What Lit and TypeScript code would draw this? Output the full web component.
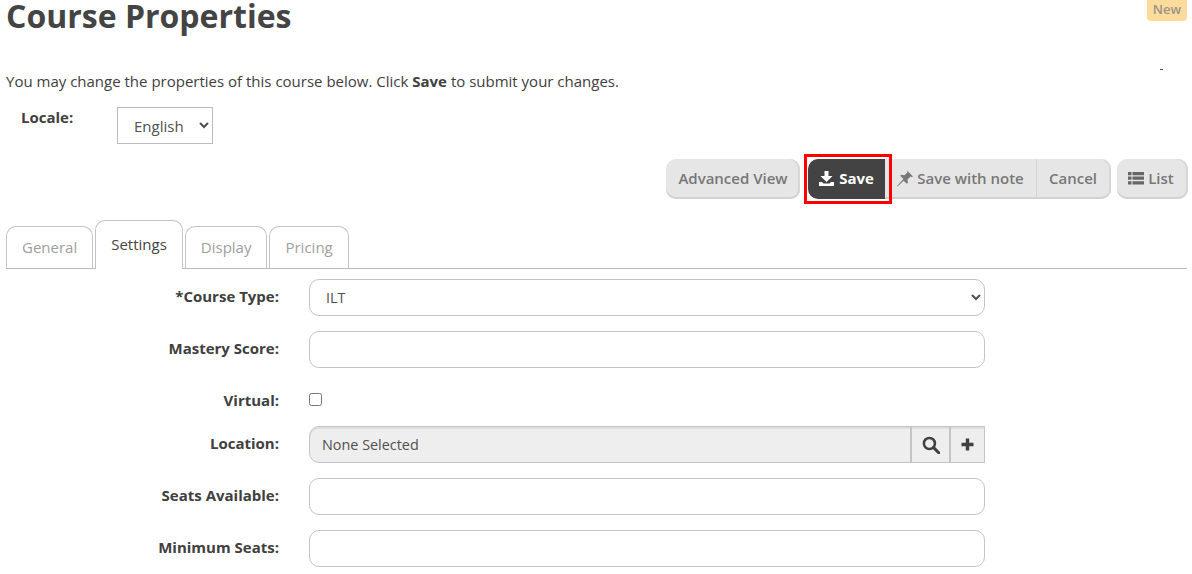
import { LitElement, html, css } from "lit";
import { customElement } from "lit/decorators.js";

@customElement("app-root")
export class AppRoot extends LitElement {
  static styles = css`
    :host { display: block; height: 574px; overflow: hidden; position: relative; font-family: "Open Sans", sans-serif; font-size: 15px; color: #404040; background: #fff; }
    .page { padding: 0 4px 0 6px; }
    h1 { margin: 0; height: 34px; font-size: 32px; line-height: 32px; font-weight: 700; color: #444; }
    .new { position: absolute; top: -4px; left: 1147px; width: 40px; height: 25px; box-sizing: border-box; padding-top: 4px; text-align: center; background: #fcdc9d; border-radius: 0 0 4px 4px; font-size: 13px; font-weight: 600; color: #9a9484; }
    .tick { position: absolute; left: 1160px; top: 69px; width: 3px; height: 1px; background: #555; }
    .intro { margin: 37px 0 0; height: 20px; line-height: 20px; }
    .locale { display: flex; margin-top: 16px; height: 37px; }
    .locale label { width: 111px; padding-left: 15px; box-sizing: border-box; font-weight: 700; line-height: 20px; }
    .locale select { width: 96px; height: 37px; border: 1px solid #bbb; background: #fff; padding: 0 0 0 12px; font: inherit; font-size: 15px; color: #505050; border-radius: 0; }
    .bar { display: flex; justify-content: flex-end; align-items: center; margin-top: 15px; height: 40px; }
    .btn { height: 40px; box-sizing: border-box; display: flex; align-items: center; gap: 4px; padding-bottom: 2px; background: #e6e6e6; color: #777; font-weight: 600; font-size: 15px; border: 0; box-shadow: inset 0 -2px 0 #d2d2d2, inset -2px 0 0 #d6d6d6; }
    .adv { width: 134px; justify-content: center; border-radius: 10px; margin-right: 8px; }
    .save { position: relative; width: 77px; justify-content: center; gap: 5px; background: #434343; color: #fff; border-radius: 10px 0 0 10px; font-weight: 700; box-shadow: none; }
    .save::after { content: ""; position: absolute; inset: -5px -7px -5px -4px; border: 3px solid #f00; box-sizing: border-box; }
    .note { width: 152px; padding-right: 1px; justify-content: center; border-right: 1px solid #d4d4d4; box-shadow: inset 0 -2px 0 #d2d2d2; }
    .cancel { width: 74px; padding-right: 2px; justify-content: center; border-radius: 0 10px 10px 0; margin-right: 6px; }
    .list { width: 71px; padding-right: 3px; justify-content: center; border-radius: 10px; }
    svg { display: block; flex: none; }
    .tabs { display: flex; align-items: flex-end; gap: 2px; margin: 20px 1px 0 0; height: 49px; border-bottom: 1px solid #bbb; }
    .tab { box-sizing: border-box; height: 42px; padding: 0 15px; line-height: 41px; border: 1px solid #c4c4c4; border-bottom: 0; border-radius: 10px 10px 0 0; color: #a0a0a0; font-size: 15px; }
    .tab.on { height: 49px; color: #444; margin-bottom: -1px; background: #fff; position: relative; line-height: 46px; }
    .form { display: grid; grid-template-columns: 273px 676px; column-gap: 30px; margin-top: 10px; }
    .lab { text-align: right; font-weight: 700; color: #404040; }
    .field { box-sizing: border-box; width: 100%; height: 37px; border: 1px solid #c4c4c4; border-radius: 10px; background: #fff; font: inherit; font-size: 14.4px; color: #505050; display: block; margin: 0; }
    select.field { padding: 0 0 0 12px; }
    .c { height: 37px; margin-bottom: 15px; display: flex; align-items: center; }
    .lab.c { justify-content: flex-end; padding-bottom: 4px; box-sizing: border-box; }
    .check { height: 32px; margin-bottom: 11px; }
    .lab.check { padding: 2px 0 0; }
    .check input { margin: 0; width: 13px; height: 13px; }
    .picker { display: flex; width: 100%; height: 37px; box-sizing: border-box; border: 1px solid #c4c4c4; border-radius: 10px 0 0 10px; background: #eee; box-shadow: inset 0 2px 0 #ddd; }
    .picker .v { flex: 1; padding-left: 12px; line-height: 35px; color: #505050; font-size: 14.4px; }
    .picker .i { width: 35px; border-left: 2px solid #c4c4c4; display: flex; align-items: center; justify-content: center; box-sizing: border-box; }
    .picker .i.s { width: 39px; }
  `;

  render() {
    return html`
      <div class="page">
        <h1>Course Properties</h1>
        <div class="intro">You may change the properties of this course below. Click <b>Save</b> to submit your changes.</div>
        <div class="locale">
          <label>Locale:</label>
          <select><option>English</option></select>
        </div>
        <div class="bar">
          <div class="btn adv">Advanced View</div>
          <div class="btn save">
            <svg width="15" height="15" viewBox="0 0 15 15"><path fill="#fff" d="M5.500 0h4v5H13.500L7.500 11 1.500 5h4zM0 11h3l1.500 1.500h6L12 11h3v4H0z"/></svg>
            Save
          </div>
          <div class="btn note">
            <svg width="17" height="17" viewBox="0 0 16 16"><path fill="#777" d="M10 0l6 6-1.200.6-1-.6-3 3 .4 3-1 1-3-3-5.800 5.600L1 15l.6-.6L7 8.500 4 5.500l1-1 3 .4 3-3-.6-1z"/></svg>
            Save with note
          </div>
          <div class="btn cancel">Cancel</div>
          <div class="btn list">
            <svg width="16" height="15" viewBox="0 0 16 15"><path fill="#666" d="M0 1h3.500v3.200H0zM4.500 1H16v3.200H4.500zM0 5.600h3.500v3.200H0zM4.500 5.600H16v3.200H4.500zM0 10.200h3.500v3.200H0zM4.500 10.200H16v3.200H4.500z"/></svg>
            List
          </div>
        </div>
        <div class="tabs">
          <div class="tab">General</div>
          <div class="tab on">Settings</div>
          <div class="tab">Display</div>
          <div class="tab">Pricing</div>
        </div>
        <div class="form">
          <div class="lab c">*Course Type:</div>
          <div class="c"><select class="field"><option>ILT</option></select></div>
          <div class="lab c">Mastery Score:</div>
          <div class="c"><input class="field" /></div>
          <div class="lab c check">Virtual:</div>
          <div class="c check"><input type="checkbox" /></div>
          <div class="lab c">Location:</div>
          <div class="c">
            <div class="picker">
              <div class="v">None Selected</div>
              <div class="i s"><svg width="18" height="18" viewBox="0 0 17 17"><circle cx="7" cy="7" r="5.200" fill="none" stroke="#404040" stroke-width="2.400"/><path d="M11 11l5 5" stroke="#404040" stroke-width="2.800" stroke-linecap="round"/></svg></div>
              <div class="i"><svg width="13" height="13" viewBox="0 0 13 13"><path fill="#404040" d="M4.800 0.500h3.400v4.300h4.300v3.400H8.200v4.300H4.800V8.200H0.500V4.800h4.300z"/></svg></div>
            </div>
          </div>
          <div class="lab c">Seats Available:</div>
          <div class="c"><input class="field" /></div>
          <div class="lab c">Minimum Seats:</div>
          <div class="c"><input class="field" /></div>
        </div>
      </div>
      <div class="new">New</div>
      <div class="tick"></div>
    `;
  }
}
